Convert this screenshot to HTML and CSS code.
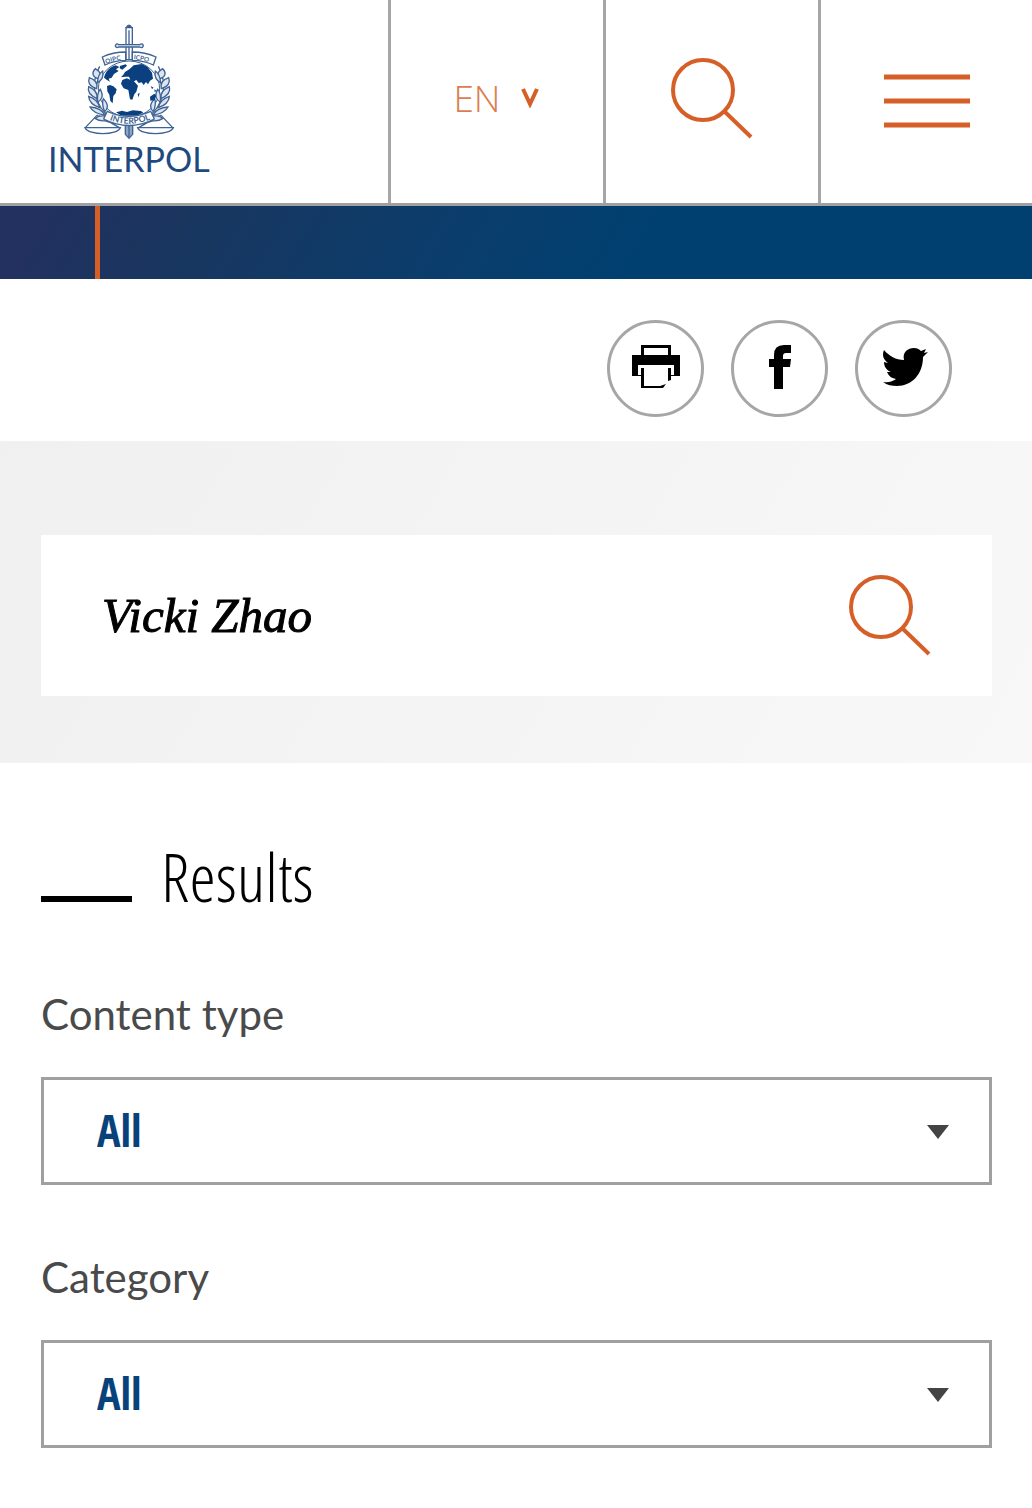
FILE: index.html
```html
<!DOCTYPE html>
<html lang="en">
<head>
    <meta charset="UTF-8">
    <meta name="viewport" content="width=device-width, initial-scale=1.0">
    <title>Search - INTERPOL</title>
    <link rel="stylesheet" href="styles.css">
</head>
<body>
    <header class="header">
        <a class="logo" href="#">
            <svg class="emblem" viewBox="159 40 276 351" fill="none" stroke="#3f6493" stroke-width="4" aria-hidden="true">
                <!-- Scales -->
                <path d="M200 318L166 354M206 318L268 354M394 318L428 354M388 318L326 354M200 316C230 344 268 344 297 344C326 344 364 344 394 316"/>
                <path d="M165 354H271C262 378 176 378 165 354ZM323 354H430C420 378 332 378 323 354Z" fill="#fff"/>
                <!-- Globe -->
                <ellipse cx="297" cy="238" rx="92" ry="84" fill="#fff" stroke-width="3"/>
                <!-- Olive branches -->
                <path d="M209 170C178 225 195 292 243 324M385 170C416 225 399 292 351 324"/>
                <g fill="#dce5ef">
                    <path d="M207 208C185 202 185 188 196 177C213 187 213 198 207 208Z"/>
                    <path d="M200 237C177 229 173 217 178 204C198 211 204 223 200 237Z"/>
                    <path d="M201 267C179 257 172 244 176 231C195 240 204 251 201 267Z"/>
                    <path d="M209 294C186 286 177 275 176 260C198 268 207 279 209 294Z"/>
                    <path d="M226 317C202 313 187 306 180 292C204 293 218 303 226 317Z"/>
                    <path d="M202 220C204 195 213 187 218 184C222 204 214 211 202 220Z"/>
                    <path d="M203 278C201 256 206 244 211 239C222 260 215 269 203 278Z"/>
                    <path d="M224 306C216 286 216 276 220 267C236 284 235 296 224 306Z"/>
                    <path d="M240 330C220 337 205 333 195 326C211 315 230 316 240 330Z"/>
                </g>
                <g fill="#dce5ef">
                    <path d="M387 208C409 202 409 188 398 177C381 187 381 198 387 208Z"/>
                    <path d="M394 237C417 229 421 217 416 204C396 211 390 223 394 237Z"/>
                    <path d="M393 267C415 257 422 244 418 231C399 240 390 251 393 267Z"/>
                    <path d="M385 294C408 286 417 275 418 260C396 268 387 279 385 294Z"/>
                    <path d="M368 317C392 313 407 306 414 292C390 293 376 303 368 317Z"/>
                    <path d="M392 220C390 195 381 187 376 184C372 204 380 211 392 220Z"/>
                    <path d="M391 278C393 256 388 244 383 239C372 260 379 269 391 278Z"/>
                    <path d="M370 306C378 286 378 276 374 267C358 284 359 296 370 306Z"/>
                    <path d="M354 330C374 337 389 333 399 326C383 315 364 316 354 330Z"/>
                </g>
                <!-- Continents -->
                <g fill="#0b4080" stroke="none">
                    <path d="M222 204C227 185 239 172 257 167L268 172L258 179L266 184L252 193L245 204L236 207L240 216L231 211Z"/>
                    <path d="M270 169L287 164L291 168L277 180L269 176ZM231 229L240 226L250 230L260 239L257 251L250 259L248 281L241 274L238 255L232 245Z"/>
                    <path d="M273 203L280 195L285 187L299 178L311 167L335 163L352 171L366 189L369 207L360 213L354 224L348 217L341 226L335 218L326 220L319 211L312 215L324 228L319 246L313 254L307 270L300 269L295 241L281 236L273 222L277 211L290 206L301 210L297 201L286 201Z"/>
                    <path d="M360 261L373 252L379 258L373 272L361 273ZM323 254L329 249L326 263ZM258 308L276 303L291 307L308 302L333 304L340 309L320 318H274ZM362 229L371 234L366 238ZM373 239L380 244L374 247Z"/>
                </g>
                <!-- Sword and ribbons -->
                <path d="M288 54H307V150H288ZM297 62V148" fill="#fff"/>
                <path d="M256 108Q259 99 266 105H329Q338 99 340 108Q338 117 329 112H266Q259 117 256 108Z" fill="#dce5ef"/>
                <path d="M288 55Q297 38 306 55" fill="#345d8f"/>
                <path d="M286 342H308V374L297 386L286 374ZM297 344V382" fill="#8ca5c2"/>
                <path d="M217 142Q249 127 287 127V152Q253 152 225 166ZM307 127Q345 127 378 142L370 166Q342 152 307 152Z" fill="#fff"/>
                <path d="M232 305Q297 335 362 305L373 328Q297 367 221 328Z" fill="#fff"/>
                <path id="arc-left" d="M229 163Q254 151 286 149" stroke="none"/>
                <path id="arc-right" d="M311 149Q342 151 370 163" stroke="none"/>
                <path id="arc-bottom" d="M226 325Q297 361 374 323" stroke="none"/>
                <g class="emblem-text">
                    <text><textPath href="#arc-left">OIPC</textPath></text>
                    <text><textPath href="#arc-right">ICPO</textPath></text>
                    <text class="emblem-name" text-anchor="middle"><textPath href="#arc-bottom" startOffset="50%">INTERPOL</textPath></text>
                </g>
            </svg>
            <span class="logo-name">INTERPOL</span>
        </a>
        <button class="header-item language" type="button">
            EN
            <svg width="18" height="20" viewBox="0 0 18 20" aria-hidden="true"><path d="M2 1L9 16L16 1" fill="none" stroke="#d65f28" stroke-width="4"/></svg>
        </button>
        <button class="header-item" type="button" aria-label="Search">
            <svg class="search-icon" viewBox="0 0 82 82"><circle cx="32" cy="32" r="30"/><path d="M53 53L80 79"/></svg>
        </button>
        <button class="header-item" type="button" aria-label="Menu">
            <svg width="86" height="56" viewBox="0 0 86 56"><path d="M0 3H86M0 27H86M0 51H86" stroke="#d65f28" stroke-width="5"/></svg>
        </button>
    </header>

    <div class="banner"></div>

    <div class="share">
        <button type="button" aria-label="Print">
            <svg viewBox="0 0 48 48">
                <path d="M0 12H9V2H39V12H48V33H39V37L36 38V25H39V32H42V22H6V32H9V25H12V43H28L34 41L31 45H9V33H0ZM12 5V12H36V5Z" fill-rule="evenodd"/>
            </svg>
        </button>
        <a href="#" aria-label="Facebook">
            <svg viewBox="0 0 48 48"><path d="M35 2V10H30Q27 10 27 13V16H35L34 24H27V46H18V24H13V16H18V12Q18 2 28 2Z"/></svg>
        </a>
        <a href="#" aria-label="Twitter">
            <svg viewBox="0 0 48 48"><path d="M4 7C9 13 16 17 24 17C22 9 28 5 34 5C37 5 39 6 41 8L46 6L44 10L48 9L43 14C43 31 32 43 17 43C12 43 7 42 3 39C9 40 13 38 16 36C11 35 9 33 7 29H11C6 27 4 23 4 19L8 20C3 16 2 12 4 7Z"/></svg>
        </a>
    </div>

    <form class="search">
        <div class="search-box">
            <input type="text" value="Vicki Zhao" aria-label="Search">
            <button type="submit" aria-label="Search">
                <svg class="search-icon" viewBox="0 0 82 82"><circle cx="32" cy="32" r="30"/><path d="M53 53L80 79"/></svg>
            </button>
        </div>
    </form>

    <main class="results">
        <h1>Results</h1>
        <div class="filter">
            <label for="contentType">Content type</label>
            <div class="select">
                <select id="contentType"><option>All</option></select>
                <svg class="arrow" viewBox="0 0 22 14"><path d="M0 0H22L11 14Z"/></svg>
            </div>
        </div>
        <div class="filter">
            <label for="category">Category</label>
            <div class="select">
                <select id="category"><option>All</option></select>
                <svg class="arrow" viewBox="0 0 22 14"><path d="M0 0H22L11 14Z"/></svg>
            </div>
        </div>
    </main>
</body>
</html>
```
FILE: styles.css
```css
* {
    box-sizing: border-box;
}
body {
    margin: 0;
    background-color: #fff;
    font-family: Lato, sans-serif;
}
button {
    padding: 0;
    border: none;
    background: none;
    cursor: pointer;
}
svg {
    display: block;
}
.header {
    display: grid;
    grid-template-columns: 1fr 215px 215px 214px;
    height: 206px;
    border-bottom: 3px solid #a0a0a0;
}
.logo {
    display: flex;
    flex-direction: column;
    align-items: center;
    justify-self: start;
    padding: 23px 0 0 48px;
    color: #1f4a7f;
    text-decoration: none;
}
.emblem {
    width: 92px;
    height: 117px;
}
.emblem-text {
    font-size: 19px;
    font-weight: bold;
    fill: #3f6493;
    stroke: none;
}
.emblem-name {
    font-size: 26px;
}
.logo-name {
    font-size: 34px;
    line-height: 38px;
}
.header-item {
    display: flex;
    align-items: center;
    justify-content: center;
    border-left: 3px solid #a6a6a6;
}
.language {
    gap: 20px;
    padding-right: 2px;
    padding-bottom: 8px;
    font-family: "Open Sans Light", "Open Sans", sans-serif;
    font-size: 37px;
    font-weight: 300;
    color: #dc7d50;
}
.search-icon {
    width: 82px;
    height: 82px;
    fill: none;
    stroke: #d65f28;
    stroke-width: 4;
}
.header .search-icon {
    margin-bottom: 6px;
}
.banner {
    height: 73px;
    background:
        linear-gradient(#d65f28, #d65f28) 95px 0 / 5px 100% no-repeat,
        linear-gradient(120deg, #22315f 5%, #19365f 18%, #0a3d6c 45%, #004070 62%);
}
.share {
    display: flex;
    justify-content: flex-end;
    gap: 27px;
    padding: 41px 80px 24px;
}
.share a,
.share button {
    display: flex;
    align-items: center;
    justify-content: center;
    width: 97px;
    height: 97px;
    padding-bottom: 3px;
    border: 3px solid #a6a6a6;
    border-radius: 50%;
}
.share svg {
    width: 48px;
    height: 48px;
}
.search {
    padding: 94px 40px 67px 41px;
    background: linear-gradient(120deg, #f0f0f0, #f8f8f8);
}
.search-box {
    display: flex;
    align-items: center;
    height: 161px;
    padding: 0 61px;
    background-color: #fff;
}
.search-box input {
    flex: 1;
    min-width: 0;
    padding: 0;
    border: none;
    outline: none;
    font: italic 49px "Liberation Serif", serif;
    -webkit-text-stroke: 1px #000;
    color: #000;
}
.results {
    padding: 69px 40px 60px 41px;
}
h1 {
    display: flex;
    align-items: baseline;
    gap: 29px;
    margin: 0 0 60px;
    font: 300 67px/88px "Open Sans Condensed Light", "Open Sans Condensed", "Open Sans", sans-serif;
}
h1::before {
    content: "";
    width: 91px;
    height: 6px;
    background-color: #000;
}
.filter {
    margin-bottom: 58px;
}
.filter label {
    display: block;
    margin-bottom: 29px;
    font-size: 42px;
    line-height: 68px;
    color: #4a4a4a;
}
.select {
    position: relative;
}
.select select {
    appearance: none;
    width: 100%;
    height: 108px;
    padding: 0 53px 2px;
    border: 3px solid #a0a0a0;
    border-radius: 0;
    background-color: #fff;
    font: bold 44px "Open Sans Condensed", "Roboto Condensed", sans-serif;
    color: #08427a;
}
.arrow {
    position: absolute;
    top: 48px;
    right: 43px;
    width: 22px;
    height: 14px;
    fill: #444;
    pointer-events: none;
}
```
